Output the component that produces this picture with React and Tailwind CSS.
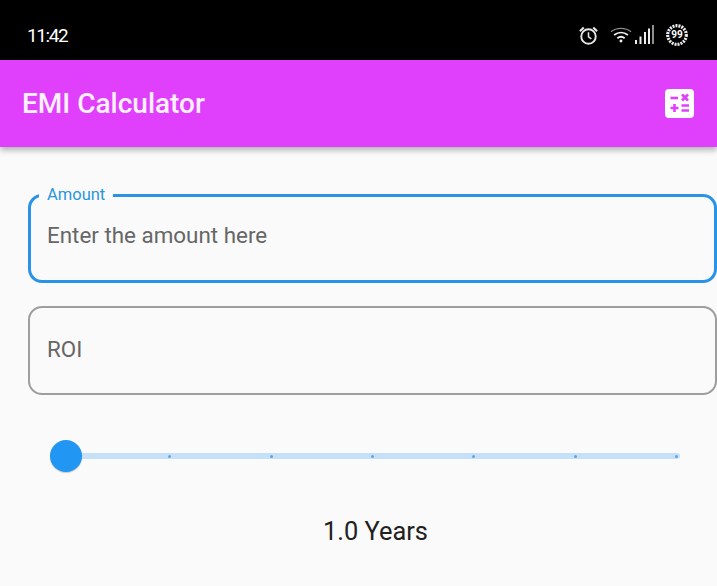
function AlarmIcon() {
  return (
    <svg width="21" height="21" viewBox="0 0 22 22" fill="none" stroke="#e8e8e8" strokeWidth="2">
      <circle cx="11" cy="12" r="7.6" />
      <path d="M11 7.5V12.5L14 14.5" strokeWidth="1.6" />
      <path d="M2 6.5L6 2.5M20 6.5L16 2.5" strokeWidth="2.2" />
    </svg>
  );
}

function WifiIcon() {
  return (
    <svg width="22" height="18" viewBox="0 0 24 18" fill="none" stroke="#f2f2f2" strokeWidth="2">
      <path d="M1 5.5C7 0.5 17 0.5 23 5.5" stroke="#8a8a8a" strokeWidth="1.4" />
      <path d="M4.5 9C9 5.5 15 5.5 19.5 9" />
      <path d="M8 12.5C10.5 10.5 13.5 10.5 16 12.5" />
      <circle cx="12" cy="15.5" r="1.6" fill="#f2f2f2" stroke="none" />
    </svg>
  );
}

function SignalIcon() {
  return (
    <svg width="19" height="20" viewBox="0 0 19 20" fill="#ededed">
      <rect x="0" y="15" width="2" height="4" />
      <rect x="4.5" y="11.5" width="2" height="7.5" />
      <rect x="9" y="7" width="2" height="12" />
      <rect x="13" y="3.5" width="2" height="15.5" />
      <rect x="17" y="0" width="2" height="19" fill="#8f8f8f" />
    </svg>
  );
}

function BatteryIcon() {
  return (
    <div className="relative flex h-[22px] w-[22px] items-center justify-center">
      <svg className="absolute inset-0" width="22" height="22" viewBox="0 0 22 22" fill="none">
        <circle cx="11" cy="11" r="9.3" stroke="#eeeeee" strokeWidth="3.2" strokeDasharray="2 1" />
      </svg>
      <span className="relative text-[10px] font-bold leading-none text-white">99</span>
    </div>
  );
}

function CalculatorIcon() {
  return (
    <svg width="29" height="29" viewBox="0 0 29 29">
      <rect width="29" height="29" rx="4" fill="#ffffff" />
      <g stroke="#e040fb" strokeWidth="2.6" fill="none">
        <path d="M5.5 9H13" />
        <path d="M17 5.5L23 11.5M23 5.5L17 11.5" />
        <path d="M5.5 19H13.5M9.5 15V23" />
        <path d="M16.5 16.5H24M16.5 21.5H24" />
      </g>
    </svg>
  );
}

function OutlinedField({ label, placeholder, focused }) {
  return (
    <div
      className={`relative flex h-[89px] items-center rounded-[14px] bg-[#fafafa] ${
        focused ? "border-[3px] border-[#2a93e6] pb-[7px] pl-[16px]" : "border-2 border-[#9e9e9e] pb-[3px] pl-[17px]"
      }`}
    >
      {focused && (
        <span className="absolute left-[8px] top-[-12px] bg-[#fafafa] px-[8px] text-[16.5px] leading-[20px] text-[#2a96dc]">
          {label}
        </span>
      )}
      <span className="text-[22.4px] leading-none text-[#666666]">{placeholder}</span>
    </div>
  );
}

export default function App() {
  const ticks = [0, 1, 2, 3, 4, 5, 6];

  return (
    <div className="flex h-[586px] w-[717px] flex-col overflow-hidden bg-[#fafafa] font-['Roboto',sans-serif]">
      {/* Status bar */}
      <div className="flex h-[60px] shrink-0 items-center justify-between bg-black pl-[27px] pr-[29px] pt-[10px]">
        <span className="text-[19px] leading-none tracking-[-1.4px] text-white">11:42</span>
        <div className="flex items-center">
          <AlarmIcon />
          <div className="ml-[11px]">
            <WifiIcon />
          </div>
          <div className="ml-[3px]">
            <SignalIcon />
          </div>
          <div className="ml-[12px]">
            <BatteryIcon />
          </div>
        </div>
      </div>

      {/* App bar */}
      <div className="z-10 flex h-[87px] shrink-0 items-center justify-between bg-[#e040fb] pl-[22px] pr-[23px] shadow-[0_3px_6px_rgba(0,0,0,0.3)]">
        <h1 className="text-[28px] font-medium leading-none text-[#fdf0ff]">EMI Calculator</h1>
        <CalculatorIcon />
      </div>

      {/* Form */}
      <div className="flex flex-col gap-[23px] pl-[28px] pt-[47px]">
        <OutlinedField label="Amount" placeholder="Enter the amount here" focused />
        <OutlinedField placeholder="ROI" />
      </div>

      {/* Slider */}
      <div className="relative ml-[66px] mr-[37px] mt-[58px] flex h-[6px] items-center justify-between rounded-r-full bg-[#c5e1f9] pl-px pr-[2px]">
        {ticks.map((t) => (
          <span key={t} className="h-[3px] w-[3px] rounded-full bg-[#64a5e0]" />
        ))}
        <span className="absolute left-[-16px] top-[-13px] h-[32px] w-[32px] rounded-full bg-[#2196f3] shadow-[0_1px_1px_rgba(0,0,0,0.2)]" />
      </div>

      <p className="mt-[60px] pl-[34px] text-center text-[25.4px] leading-none text-[#212121]">1.0 Years</p>
    </div>
  );
}
